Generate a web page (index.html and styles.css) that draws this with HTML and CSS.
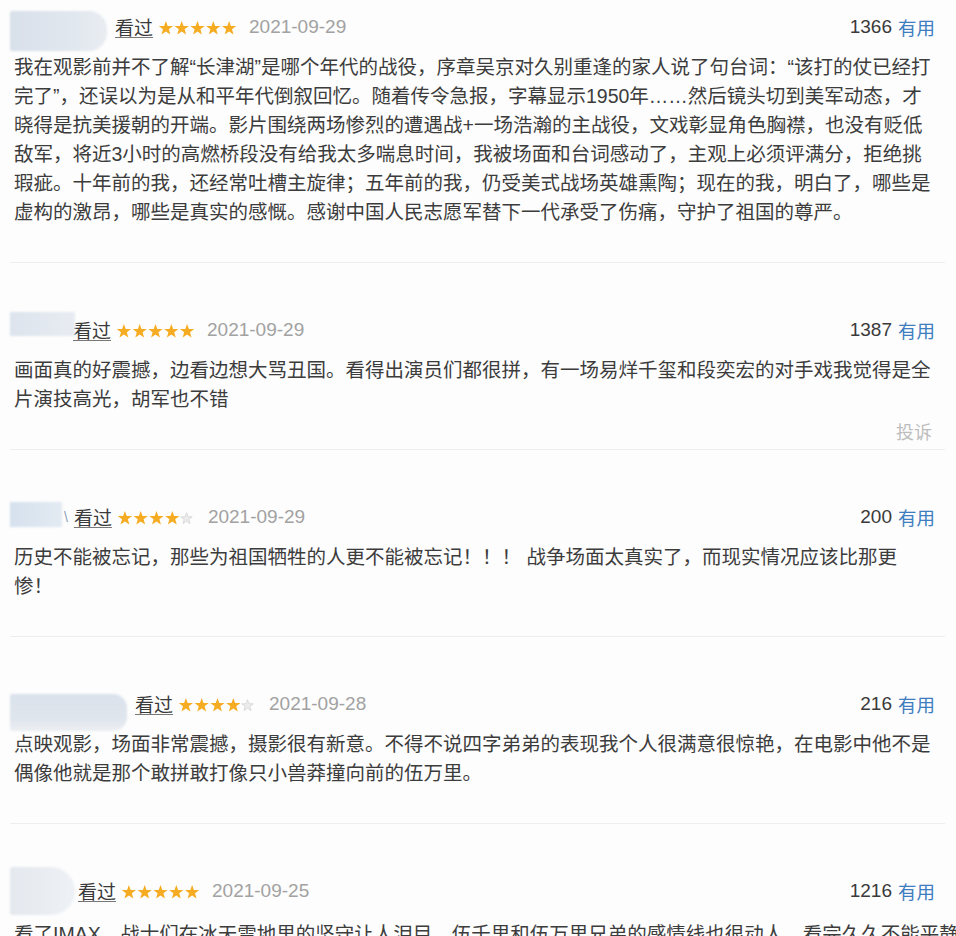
FILE: index.html
```html
<!DOCTYPE html>
<html lang="zh-CN">
<head>
<meta charset="utf-8">
<title>短评</title>
<link rel="stylesheet" href="styles.css">
</head>
<body>
<svg class="defs" width="0" height="0" aria-hidden="true">
  <defs>
    <polygon id="star" points="8,0.8 9.82,5.89 15.23,6.05 10.95,9.36 12.47,14.55 8,11.5 3.53,14.55 5.05,9.36 0.77,6.05 6.18,5.89"/>
  </defs>
</svg>
<div class="list">
  <div class="review first">
    <div class="head">
      <div class="user">
        <span class="av av1"></span><span class="frag">i</span>
        <span class="seen">看过</span>
        <svg class="stars" viewBox="0 0 80 16" width="80" height="16"><g class="on"><use href="#star" x="0"/><use href="#star" x="16"/><use href="#star" x="32"/><use href="#star" x="48"/><use href="#star" x="64"/></g></svg>
        <span class="date">2021-09-29</span>
      </div>
      <div class="vote"><span class="count">1366</span><span class="useful">有用</span></div>
    </div>
    <p class="text">我在观影前并不了解“长津湖”是哪个年代的战役，序章吴京对久别重逢的家人说了句台词：“该打的仗已经打<br>完了”，还误以为是从和平年代倒叙回忆。随着传令急报，字幕显示1950年……然后镜头切到美军动态，才<br>晓得是抗美援朝的开端。影片围绕两场惨烈的遭遇战+一场浩瀚的主战役，文戏彰显角色胸襟，也没有贬低<br>敌军，将近3小时的高燃桥段没有给我太多喘息时间，我被场面和台词感动了，主观上必须评满分，拒绝挑<br>瑕疵。十年前的我，还经常吐槽主旋律；五年前的我，仍受美式战场英雄熏陶；现在的我，明白了，哪些是<br>虚构的激昂，哪些是真实的感慨。感谢中国人民志愿军替下一代承受了伤痛，守护了祖国的尊严。</p>
    <div class="foot"></div>
  </div>

  <div class="review">
    <div class="head">
      <div class="user">
        <span class="av av2"></span>
        <span class="seen">看过</span>
        <svg class="stars" viewBox="0 0 80 16" width="80" height="16"><g class="on"><use href="#star" x="0"/><use href="#star" x="16"/><use href="#star" x="32"/><use href="#star" x="48"/><use href="#star" x="64"/></g></svg>
        <span class="date">2021-09-29</span>
      </div>
      <div class="vote"><span class="count">1387</span><span class="useful">有用</span></div>
    </div>
    <p class="text">画面真的好震撼，边看边想大骂丑国。看得出演员们都很拼，有一场易烊千玺和段奕宏的对手戏我觉得是全<br>片演技高光，胡军也不错</p>
    <div class="foot"><span class="report">投诉</span></div>
  </div>

  <div class="review">
    <div class="head">
      <div class="user">
        <span class="av av3"></span><span class="frag frag3">\</span>
        <span class="seen">看过</span>
        <svg class="stars" viewBox="0 0 80 16" width="80" height="16"><g class="on"><use href="#star" x="0"/><use href="#star" x="16"/><use href="#star" x="32"/><use href="#star" x="48"/></g><use class="off" href="#star" x="64"/></svg>
        <span class="date">2021-09-29</span>
      </div>
      <div class="vote"><span class="count">200</span><span class="useful">有用</span></div>
    </div>
    <p class="text">历史不能被忘记，那些为祖国牺牲的人更不能被忘记！！！ 战争场面太真实了，而现实情况应该比那更<br>惨！</p>
    <div class="foot"></div>
  </div>

  <div class="review">
    <div class="head">
      <div class="user">
        <span class="av av4"></span>
        <span class="seen">看过</span>
        <svg class="stars" viewBox="0 0 80 16" width="80" height="16"><g class="on"><use href="#star" x="0"/><use href="#star" x="16"/><use href="#star" x="32"/><use href="#star" x="48"/></g><use class="off" href="#star" x="64"/></svg>
        <span class="date">2021-09-28</span>
      </div>
      <div class="vote"><span class="count">216</span><span class="useful">有用</span></div>
    </div>
    <p class="text">点映观影，场面非常震撼，摄影很有新意。不得不说四字弟弟的表现我个人很满意很惊艳，在电影中他不是<br>偶像他就是那个敢拼敢打像只小兽莽撞向前的伍万里。</p>
    <div class="foot"></div>
  </div>

  <div class="review last">
    <div class="head">
      <div class="user">
        <span class="av av5"></span>
        <span class="seen">看过</span>
        <svg class="stars" viewBox="0 0 80 16" width="80" height="16"><g class="on"><use href="#star" x="0"/><use href="#star" x="16"/><use href="#star" x="32"/><use href="#star" x="48"/><use href="#star" x="64"/></g></svg>
        <span class="date">2021-09-25</span>
      </div>
      <div class="vote"><span class="count">1216</span><span class="useful">有用</span></div>
    </div>
    <p class="text">看了IMAX，战士们在冰天雪地里的坚守让人泪目，伍千里和伍万里兄弟的感情线也很动人，看完久久不能平静</p>
    <div class="foot"></div>
  </div>
</div>
</body>
</html>
```

FILE: styles.css
```css
html, body {
  margin: 0;
  padding: 0;
  background: #fdfdfd;
}

body {
  font-family: "Liberation Sans", "Noto Sans CJK SC", sans-serif;
  color: #3a3a3a;
  overflow: hidden;
  height: 936px;
}

.defs {
  position: absolute;
  width: 0;
  height: 0;
}

.list {
  margin: 0 11px 0 10px;
}

.review {
  padding: 52px 0 3px;
  border-bottom: 1px solid #eeeeee;
}

.review.first {
  padding-top: 12px;
}

.review.last .text {
  margin-top: 14px;
}

.head {
  height: 30px;
  display: flex;
  align-items: center;
  justify-content: space-between;
  padding-right: 10px;
  font-size: 19px;
}

.user {
  display: flex;
  align-items: center;
  height: 30px;
}

.av {
  display: block;
  flex: none;
  background: linear-gradient(90deg, #d8e0ea, #e2e8ef 70%, #e9edf2);
  filter: blur(1.2px);
}

.av1 {
  width: 97px;
  height: 40px;
  border-radius: 2px 18px 18px 2px;
  transform: translateY(4px);
}

.av2 {
  width: 65px;
  height: 24px;
  margin-right: -2px;
  transform: translateY(-6px);
  background: linear-gradient(90deg, #dde4ed, #e8ecf2);
}

.av3 {
  width: 52px;
  height: 25px;
  transform: translateY(-3px);
  background: linear-gradient(90deg, #d5e1ee, #e3eaf2);
}

.av4 {
  width: 117px;
  height: 37px;
  margin-right: 8px;
  border-radius: 2px 14px 14px 2px;
  transform: translateY(8px);
  background: linear-gradient(180deg, #dae2ec 0%, #e0e6ed 70%, #eceff3 100%);
}

.av5 {
  width: 65px;
  height: 48px;
  margin-right: 3px;
  border-radius: 2px 24px 24px 2px;
  background: linear-gradient(90deg, #e4e9ef, #eef1f5);
}

.frag {
  color: #9a9a9a;
  font-size: 18px;
  margin-left: -6px;
  margin-right: 10px;
}

.frag3 {
  margin-left: 2px;
  margin-right: 6px;
  font-size: 14px;
  color: #8aa0b8;
}

.seen {
  color: #3a3a3a;
  text-decoration: underline;
  text-decoration-color: #777;
  text-underline-offset: 2px;
  font-family: "Noto Sans CJK SC", sans-serif;
  font-size: 19px;
  line-height: 30px;
}

.stars {
  display: block;
  width: 79px;
  height: 16px;
  margin-left: 5px;
  margin-top: 1px;
}

.stars .on {
  fill: #f6ac22;
}

.stars .off {
  fill: #ececec;
  stroke: #d4d4d4;
  stroke-width: 1;
  transform: translate(0, 2px) scale(0.8);
  transform-origin: 64px 0;
}

.date {
  margin-left: 12px;
  color: #a2a2a2;
  font-size: 19px;
}

.vote {
  display: flex;
  align-items: center;
}

.count {
  color: #3a3a3a;
  font-size: 19px;
}

.useful {
  margin-left: 6px;
  color: #3e7ec0;
  font-family: "Noto Sans CJK SC", sans-serif;
  font-size: 18.5px;
}

.text {
  margin: 11px 0 0;
  padding-left: 4px;
  font-size: 19.5px;
  line-height: 29px;
  white-space: nowrap;
  color: #3c3c3c;
}

.foot {
  height: 30px;
  margin-top: 2px;
  padding-right: 13px;
  text-align: right;
  line-height: 30px;
}

.report {
  color: #bdbdbd;
  font-family: "Noto Sans CJK SC", sans-serif;
  font-size: 18px;
}
```
